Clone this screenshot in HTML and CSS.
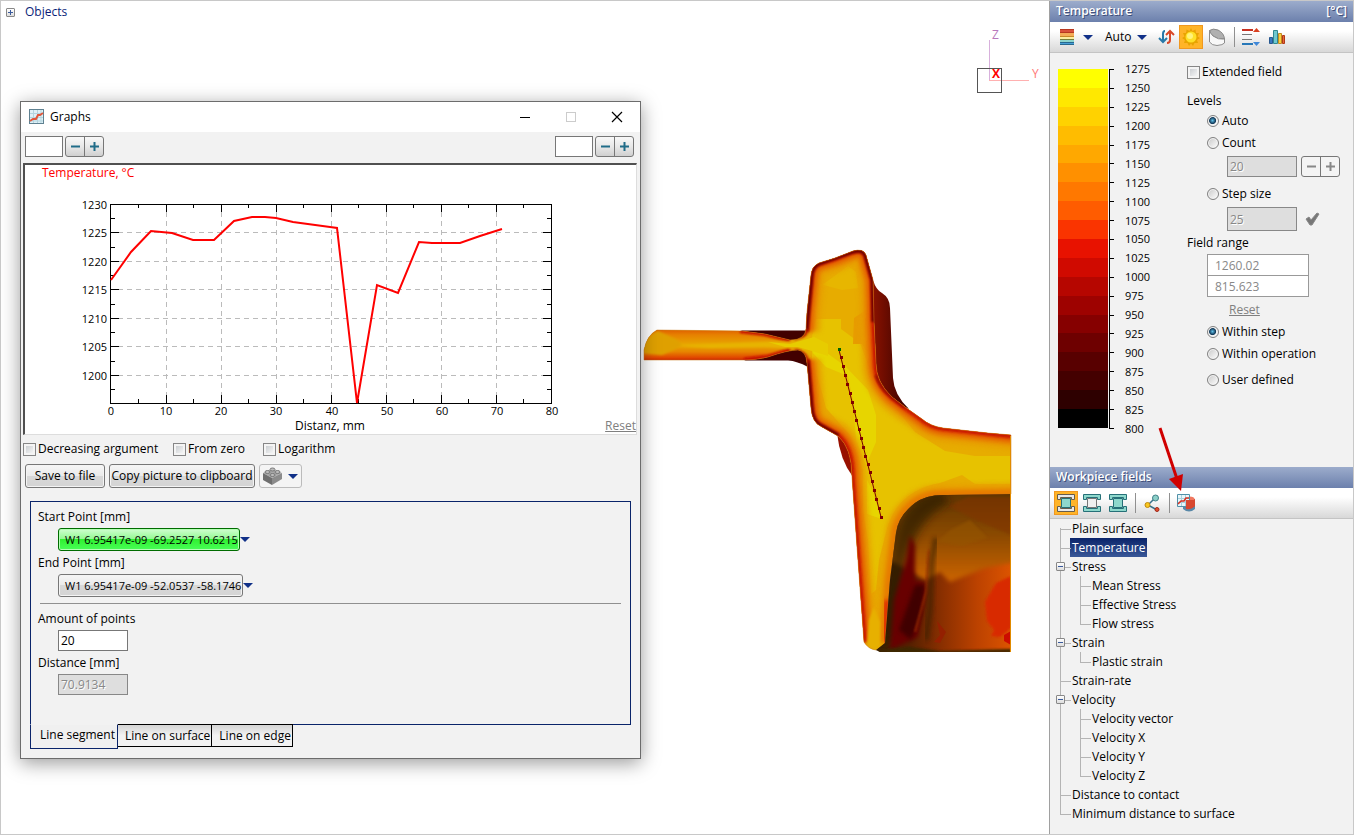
FILE: index.html
```html
<!DOCTYPE html>
<html lang="en">

<head>
    <meta charset="UTF-8">
    <meta name="viewport" content="width=device-width, initial-scale=1.0">
    <title>Graphs</title>
    <link rel="stylesheet" href="styles.css">
</head>

<body>
    <main class="viewport">
        <div class="objects">
            <button class="toggle" aria-label="Expand objects">
                <svg width="9" height="9" viewBox="0 0 9 9"><path d="M2 4.500h5M4.500 2v5" stroke="#3a5a9c"/></svg>
            </button>
            <a href="#objects">Objects</a>
        </div>

        <svg class="axes" width="70" height="70" viewBox="972 26 70 70">
            <path d="M989.500 40V80" stroke="#d8b0dc" fill="none"/>
            <path d="M989 80.500H1029" stroke="#ffb0b0" fill="none"/>
            <rect x="977.500" y="68.500" width="24" height="24" fill="none" stroke="#555"/>
            <text x="992" y="39" fill="#b878bc">Z</text>
            <text x="992" y="78" fill="#f00" class="axis-x">X</text>
            <text x="1032" y="78" fill="#ff7878">Y</text>
        </svg>

        <svg class="workpiece" width="376" height="410" viewBox="640 246 376 410">
            <defs>
                <path id="section" d="M811 275Q812 266 819 263L835 258L853 251Q863 248 866 255L873 280L874 322L876 363Q876 382 892 397L905 407L922 419Q930 426 943 428L988 433L1011 435V494L947 495Q927 494 915 503Q898 516 896 533L890 580L885 643Q882 649 876 650Q868 649 864 642L857 547L852 477Q852 448 838 436L822 427Q812 423 811 408L807 363Q806 351 798 350Q788 350 768 357Q757 360 744 360L644 360V350Q647 335 657 330L742 331L765 334L790 340Q805 340 806 329L807 312Z"/>
                <path id="outer" d="M806 331L807 312L811 275Q812 266 819 263L835 258L853 251Q863 248 866 255L873 280L874 322L876 363Q876 382 892 397L905 407L922 419Q930 426 943 428L988 433L1016 436M807 360L811 408Q812 423 822 427L838 436Q852 448 852 477L857 547L864 642"/>
                <path id="inner" d="M1016 494L947 495Q927 494 915 503Q898 516 896 533L890 580L885 643"/>
                <clipPath id="sectionClip"><use href="#section"/></clipPath>
                <clipPath id="pocketClip"><path id="pocket" d="M1011 494L947 495Q927 494 915 503Q898 516 896 533L890 580L885 643L876 650L880 652H1011Z"/></clipPath>
                <linearGradient id="pocketFill">
                    <stop offset="0" stop-color="#3a2000"/>
                    <stop offset=".25" stop-color="#542000"/>
                    <stop offset=".5" stop-color="#8c3000"/>
                    <stop offset=".75" stop-color="#bc4200"/>
                    <stop offset="1" stop-color="#dc5400"/>
                </linearGradient>
                <linearGradient id="pocketTop" x1="0" y1="0" x2="0" y2="1">
                    <stop offset="0" stop-color="#5c3400"/>
                    <stop offset=".5" stop-color="#8c4a00"/>
                    <stop offset="1" stop-color="#cc6400"/>
                </linearGradient>
                <linearGradient id="backWall">
                    <stop offset="0" stop-color="#8c1200"/>
                    <stop offset=".5" stop-color="#600a00"/>
                    <stop offset="1" stop-color="#380000"/>
                </linearGradient>
                <linearGradient id="arm" x1="0" y1="0" x2="0" y2="1">
                    <stop offset="0" stop-color="#dc5400"/>
                    <stop offset=".2" stop-color="#e78000"/>
                    <stop offset=".5" stop-color="#e7a800"/>
                    <stop offset=".7" stop-color="#e78400"/>
                    <stop offset=".88" stop-color="#e04400"/>
                    <stop offset="1" stop-color="#b00c00"/>
                </linearGradient>
                <filter id="soft1"><feGaussianBlur stdDeviation="1"/></filter>
                <filter id="soft2"><feGaussianBlur stdDeviation="2"/></filter>
                <filter id="soft4"><feGaussianBlur stdDeviation="4"/></filter>
            </defs>

            <path d="M873 280Q876 290 882 293Q890 298 890 308L893 378Q894 395 909 409L890 400L872 370Z" fill="url(#backWall)"/>
            <path d="M740 330.500H808V348H790L765 336ZM744 360.500H788Q797 361 808 367V346H790Z" fill="#420000"/>
            <path d="M837 433Q840 460 853 477L856 440Z" fill="#981000"/>

            <use href="#section" fill="#e7ac00"/>
            <g clip-path="url(#sectionClip)">
                <path d="M816 319H841V329L860 343L872 375L893 405L915 432L945 451L975 456H1011V484H975L962 475L940 483Q900 490 888 525L879 560L876 590L871 594L868 540L863 510V470L850 435L826 408L820 385L812 362L812 336Z" fill="#e7c200"/>
                <path d="M812 337L820 348L845 366L868 390L876 415V442L866 465L856 440L853 400L848 376L826 367L812 352Z" fill="#e7d500"/>
                <path d="M867 480L872 490L882 519L867 514Z" fill="#e7d500"/>
                <path d="M818 288L848 266L856 272L858 288L842 290L820 284Z" fill="#e7b600"/>
                <path d="M854 318L872 306V360L862 344H853Z" fill="#e79c00"/>
                <g fill="none" stroke-linejoin="round">
                    <use href="#inner" stroke="#e7a000" stroke-width="22" filter="url(#soft2)" opacity=".8"/>
                    <use href="#inner" stroke="#e77c00" stroke-width="11" filter="url(#soft2)"/>
                    <use href="#outer" stroke="#e79c00" stroke-width="29" filter="url(#soft2)" opacity=".65"/>
                    <use href="#outer" stroke="#e77c00" stroke-width="18" filter="url(#soft2)"/>
                    <use href="#outer" stroke="#e04400" stroke-width="9" filter="url(#soft2)"/>
                    <use href="#outer" stroke="#c81800" stroke-width="5" filter="url(#soft1)"/>
                    <path d="M885 643L888 600" stroke="#e03000" stroke-width="9" filter="url(#soft2)"/>
                    <path d="M806 331L811 275Q812 266 819 263L853 251Q863 248 866 255L873 280L874 322M807 360L811 408Q812 423 822 427L838 436" stroke="#700000" stroke-width="5" filter="url(#soft1)"/>
                    <path d="M876 375Q880 388 892 397L905 407" stroke="#980c00" stroke-width="3" filter="url(#soft1)"/>
                </g>
                <path d="M640 328H742L765 334L790 340H802V350H790L768 357L744 362H640Z" fill="url(#arm)"/>
                <path d="M740 331L765 334L790 340M744 360L768 357L790 350" fill="none" stroke="#c41000" stroke-width="4" filter="url(#soft1)"/>
                <path d="M795 341Q805 340 807 329M795 350Q806 351 808 363" fill="none" stroke="#b81800" stroke-width="3" filter="url(#soft1)"/>
                <path d="M675 346L690 345L765 342L790 342L812 335V354L798 348H785L765 347L710 348Z" fill="#e7b400" filter="url(#soft1)"/>
                <path d="M768 342L790 344L814 337L828 344V356L812 351L798 347L785 347Z" fill="#e7cc00"/>
                <path d="M642 353Q647 335 658 331L676 339L682 345L674 350L662 355Z" fill="#dfa000" filter="url(#soft1)"/>
                <path d="M867 644L869 620L874 607L880 622V644L874 650Z" fill="#e7b000" filter="url(#soft1)"/>
            </g>
            <use href="#section" fill="none" stroke="#c87818" stroke-opacity=".5"/>

            <use href="#pocket" fill="url(#pocketFill)"/>
            <g clip-path="url(#pocketClip)">
                <path d="M890 560L905 490H1016V562L985 568L950 582L940 572L925 580Z" fill="url(#pocketTop)" filter="url(#soft2)"/>
                <path d="M948 506L968 497H1011V535L975 520Z" fill="#803600" opacity=".6" filter="url(#soft1)"/>
                <path d="M936 542L950 530L970 520L988 538L962 546Z" fill="#945400" opacity=".6" filter="url(#soft1)"/>
                <path d="M890 560Q895 500 940 490L950 502Q918 518 907 560L901 630L880 650Z" fill="#2c1c00" opacity=".7" filter="url(#soft4)"/>
                <path d="M910 535L915 545V580L925 582L926 592L918 637L890 650L894 600L906 560Z" fill="#680600" filter="url(#soft2)"/>
                <path d="M915 585H925L921 615L911 640L899 630Z" fill="#400000" filter="url(#soft2)"/>
                <path d="M929 550L926 592L915 632" fill="none" stroke="#a03000" stroke-width="2" filter="url(#soft1)" opacity=".8"/>
                <path d="M936 538L932 560L930 610L926 640" fill="none" stroke="#3a2000" stroke-width="6" opacity=".6" filter="url(#soft2)"/>
                <path d="M1011 576L996 583L985 602L987 621L994 630L991 636L1000 637L1011 628Z" fill="#d82c00" filter="url(#soft1)"/>
                <path d="M1011 631L1004 635V641L1011 645Z" fill="#cc0c00"/>
                <path d="M937 621L946 632L940 643L934 642L940 635Z" fill="#942000"/>
                <path d="M878 650L910 647L940 651L1011 649V653H878Z" fill="#3c2800" filter="url(#soft1)"/>
            </g>
            <path d="M1010.500 436V652" stroke="#e08a00"/>

            <path d="M839 350L881 517" stroke="#780000"/>
            <path class="probe" d="M841.500 357.500h0M843.500 366.500h0M845.500 375.500h0M847.500 384.500h0M850.500 393.500h0M852.500 402.500h0M854.500 411.500h0M856.500 420.500h0M859.500 429.500h0M861.500 438.500h0M863.500 447.500h0M865.500 456.500h0M868.500 464.500h0M870.500 472.500h0M872.500 481.500h0M874.500 490.500h0M876.500 499.500h0M879.500 508.500h0M881.500 517.500h0"/>
            <rect x="838" y="348" width="3" height="3" fill="#006400"/>
        </svg>

        <section class="window" aria-label="Graphs">
            <header class="window-title">
                <svg width="16" height="16" viewBox="0 0 16 16">
                    <rect x=".5" y=".5" width="14" height="14" fill="#dff1f7" stroke="#5f8191"/>
                    <path d="M4.500 1v13M8.500 1v13M12 1v13M1 4.500h13M1 8.500h13M1 12h13" stroke="#b5d5df"/>
                    <path d="M1 12L4 10H7L9 6H11L14 4" fill="none" stroke="#e0583c" stroke-width="2"/>
                </svg>
                <h1>Graphs</h1>
                <div class="window-controls">
                    <button aria-label="Minimize"><svg width="12" height="12"><path d="M1 6.500h10" stroke="#000"/></svg></button>
                    <button aria-label="Maximize" disabled><svg width="12" height="12"><rect x="1.500" y="1.500" width="9" height="9" fill="none" stroke="#ccc"/></svg></button>
                    <button aria-label="Close"><svg width="12" height="12"><path d="M1 1L11 11M11 1L1 11" stroke="#000" stroke-width="1.200"/></svg></button>
                </div>
            </header>

            <div class="window-tools">
                <div class="stepper">
                    <input type="text" class="field tiny" aria-label="Left axis">
                    <span class="pair"><button aria-label="Decrease left"><svg width="9" height="9"><path d="M0 4.500h9" /></svg></button><button aria-label="Increase left"><svg width="9" height="9"><path d="M0 4.500h9M4.500 0v9"/></svg></button></span>
                </div>
                <div class="stepper">
                    <input type="text" class="field tiny" aria-label="Right axis">
                    <span class="pair"><button aria-label="Decrease right"><svg width="9" height="9"><path d="M0 4.500h9"/></svg></button><button aria-label="Increase right"><svg width="9" height="9"><path d="M0 4.500h9M4.500 0v9"/></svg></button></span>
                </div>
            </div>

            <div class="chart">
                <svg viewBox="25 165 611 269">
                    <path class="grid" d="M166.500 212V403M221.500 212V403M276.500 212V403M331.500 212V403M386.500 212V403M441.500 212V403M496.500 212V403M118 232.500H551M118 261.500H551M118 289.500H551M118 318.500H551M118 346.500H551M118 375.500H551"/>
                    <path class="ticks" d="M110.500 204.500H551.500V403.500H110.500ZM166 204v8M221 204v8M276 204v8M331 204v8M386 204v8M441 204v8M496 204v8M166 403v-8M221 403v-8M276 403v-8M331 403v-8M386 403v-8M441 403v-8M496 403v-8"/>
                    <path class="ticks" d="M138 204v4M193 204v4M248 204v4M303 204v4M358 204v4M413 204v4M468 204v4M523 204v4M138 403v-4M193 403v-4M248 403v-4M303 403v-4M358 403v-4M413 403v-4M468 403v-4M523 403v-4"/>
                    <path class="ticks" d="M111 232h8M111 261h8M111 289h8M111 318h8M111 346h8M111 375h8M551 232h-8M551 261h-8M551 289h-8M551 318h-8M551 346h-8M551 375h-8"/>
                    <path class="ticks" d="M111 218h4M111 247h4M111 275h4M111 304h4M111 332h4M111 361h4M111 389h4M551 218h-4M551 247h-4M551 275h-4M551 304h-4M551 332h-4M551 361h-4M551 389h-4"/>
                    <polyline class="curve" points="111,280 131,252 151,231 172,233 193,240 214,240 234,221 252,217 265,217 276,218 293,222 330,227 337,228 357,403 377,285 398,293 419,242 432,243 460,243 480,236 502,229"/>
                    <text x="42" y="177" class="curve-name">Temperature, °C</text>
                    <g class="numbers" text-anchor="end">
                        <text x="107" y="209">1230</text>
                        <text x="107" y="237">1225</text>
                        <text x="107" y="266">1220</text>
                        <text x="107" y="294">1215</text>
                        <text x="107" y="323">1210</text>
                        <text x="107" y="351">1205</text>
                        <text x="107" y="380">1200</text>
                    </g>
                    <g class="numbers" text-anchor="middle">
                        <text x="111" y="415">0</text>
                        <text x="166" y="415">10</text>
                        <text x="221" y="415">20</text>
                        <text x="276" y="415">30</text>
                        <text x="332" y="415">40</text>
                        <text x="387" y="415">50</text>
                        <text x="442" y="415">60</text>
                        <text x="497" y="415">70</text>
                        <text x="552" y="415">80</text>
                    </g>
                    <text x="330" y="430" text-anchor="middle">Distanz, mm</text>
                </svg>
                <a href="#reset" class="reset chart-reset">Reset</a>
            </div>

            <div class="options">
                <label><input type="checkbox" class="check">Decreasing argument</label>
                <label><input type="checkbox" class="check">From zero</label>
                <label><input type="checkbox" class="check">Logarithm</label>
            </div>

            <div class="actions">
                <button class="button save">Save to file</button>
                <button class="button copy">Copy picture to clipboard</button>
                <button class="button brick" aria-label="Palette">
                    <svg width="19" height="19" viewBox="0 0 19 19">
                        <path d="M0 6L9 2L19 6L9 11Z" fill="#a8a8a8"/>
                        <path d="M0 6L9 11V18L0 13Z" fill="#6f6f6f"/>
                        <path d="M19 6L9 11V18L19 12Z" fill="#8b8b8b"/>
                        <g fill="#bcbcbc" stroke="#777">
                            <ellipse cx="9.500" cy="2.500" rx="2.500" ry="1.500"/>
                            <ellipse cx="4.500" cy="5" rx="2.500" ry="1.500"/>
                            <ellipse cx="14.500" cy="5" rx="2.500" ry="1.500"/>
                            <ellipse cx="9.500" cy="8" rx="2.500" ry="1.500"/>
                        </g>
                    </svg>
                    <span class="arrow"></span>
                </button>
            </div>

            <div class="panel">
                <p>Start Point [mm]</p>
                <div class="point"><button class="button coords green">W1 6.95417e-09 -69.2527 10.6215</button><span class="arrow"></span></div>
                <p>End Point [mm]</p>
                <div class="point"><button class="button coords">W1 6.95417e-09 -52.0537 -58.1746</button><span class="arrow"></span></div>
                <hr>
                <label for="amount">Amount of points</label>
                <input type="text" id="amount" class="field" value="20">
                <label for="distance">Distance [mm]</label>
                <input type="text" id="distance" class="field" value="70.9134" disabled>
            </div>
            <nav class="tabs">
                <button class="tab active">Line segment</button>
                <button class="tab">Line on surface</button>
                <button class="tab">Line on edge</button>
            </nav>
        </section>
    </main>

    <aside class="sidebar">
        <header class="caption"><h2>Temperature</h2><span>[°C]</span></header>
        <div class="toolbar">
            <button class="tool palette" aria-label="Color scale">
                <svg width="16" height="18" viewBox="0 0 16 18">
                    <path d="M1 1h14v3H1z" fill="#d8503c"/><path d="M1 4h14v4H1z" fill="#f4ac58"/>
                    <path d="M1 8h14v3H1z" fill="#fbeea0"/><path d="M1 11h14v3H1z" fill="#8cd4cc"/><path d="M1 14h14v3H1z" fill="#48a0d8"/>
                    <path d="M1 1.500h14M1 4.500h14" stroke="#b83820"/><path d="M1 8.500h14" stroke="#c88828"/><path d="M1 11.500h14" stroke="#78803c"/><path d="M1 14.500h14M1 16.500h14" stroke="#286890"/>
                </svg>
                <span class="arrow"></span>
            </button>
            <button class="tool auto">Auto <span class="arrow"></span></button>
            <button class="tool" aria-label="Invert">
                <svg width="17" height="16" viewBox="0 0 17 16" fill="none" stroke-width="2">
                    <path d="M7 2Q5 2 5 5V13M1 9L5 13L9 9" stroke="#2878a8"/>
                    <path d="M9 14Q12 14 12 11V2M8 6L12 2L16 6" stroke="#d84828"/>
                </svg>
            </button>
            <button class="tool pressed" aria-label="Lighting">
                <svg width="18" height="18" viewBox="0 0 18 18">
                    <path d="M9 0L10.500 3L13.500 1.500L14 5L17 5L15.500 8.500L18 10L15 12L16 15H12.500L11 18L9 15.500L7 18L5.500 15H2L3 12L0 10L2.500 8.500L1 5L4 5L4.500 1.500L7.500 3Z" fill="#e8a400"/>
                    <circle cx="9" cy="9" r="5.500" fill="#ffe028"/><circle cx="8" cy="8" r="3" fill="#fff27c"/>
                </svg>
            </button>
            <button class="tool" aria-label="Section">
                <svg width="18" height="18" viewBox="0 0 18 18">
                    <path d="M1.500 2.500Q5 0 10 2Q16 5 16.500 11Q10 12 5 8Q2 5 1.500 2.500Z" fill="#b0b0b0" stroke="#888"/>
                    <path d="M1.500 2.500V14Q4 17.500 9 17.500Q15 17 16.500 15V11Q10 12 5 8Q2 5 1.500 2.500Z" fill="#f8f8f8" stroke="#8c8c8c"/>
                </svg>
            </button>
            <span class="divider"></span>
            <button class="tool" aria-label="Limits">
                <svg width="19" height="18" viewBox="0 0 19 18">
                    <path d="M0 2h11" stroke="#c83020" stroke-width="2"/><path d="M0 6.500h10M0 11.500h10" stroke="#777"/><path d="M0 16h11" stroke="#2878b8" stroke-width="2"/>
                    <path d="M11 4L14.500 0L18 4Z" fill="#d84020"/><path d="M11 14L14.500 18L18 14Z" fill="#4088d8"/>
                </svg>
            </button>
            <button class="tool" aria-label="Histogram">
                <svg width="18" height="16" viewBox="0 0 18 16">
                    <path d="M1.500 8.500h3v6h-3z" fill="#3878c0" stroke="#285890"/><path d="M5.500 1.500h4v13h-4z" fill="#70c8d0" stroke="#308890"/>
                    <path d="M10.500 4.500h3v10h-3z" fill="#f8d040" stroke="#c08820"/><path d="M14.500 6.500h2v8h-2z" fill="#e86838" stroke="#b03818"/>
                </svg>
            </button>
        </div>

        <div class="temperature">
            <div class="scale">
                <div class="bands">
                    <i class="t1"></i><i class="t2"></i><i class="t3"></i><i class="t4"></i><i class="t5"></i><i class="t6"></i><i class="t7"></i><i class="t8"></i><i class="t9"></i><i class="t10"></i><i class="t11"></i><i class="t12"></i><i class="t13"></i><i class="t14"></i><i class="t15"></i><i class="t16"></i><i class="t17"></i><i class="t18"></i><i class="t19"></i>
                </div>
                <div class="marks">
                    <i></i><i></i><i></i><i></i><i></i><i></i><i></i><i></i><i></i><i></i><i></i><i></i><i></i><i></i><i></i><i></i><i></i><i></i><i></i><i></i>
                </div>
                <ol class="values">
                    <li>1275</li><li>1250</li><li>1225</li><li>1200</li><li>1175</li><li>1150</li><li>1125</li><li>1100</li><li>1075</li><li>1050</li><li>1025</li><li>1000</li><li>975</li><li>950</li><li>925</li><li>900</li><li>875</li><li>850</li><li>825</li><li>800</li>
                </ol>
            </div>
            <form class="settings">
                <label><input type="checkbox" class="check">Extended field</label>
                <p class="levels">Levels</p>
                <label class="sub"><input type="radio" class="radio" name="levels" checked>Auto</label>
                <label class="sub count"><input type="radio" class="radio" name="levels">Count</label>
                <div class="amount">
                    <input type="text" class="field" value="20" aria-label="Count" disabled>
                    <span class="pair"><button disabled aria-label="Less"><svg width="9" height="9"><path d="M0 4.500h9"/></svg></button><button disabled aria-label="More"><svg width="9" height="9"><path d="M0 4.500h9M4.500 0v9"/></svg></button></span>
                </div>
                <label class="sub"><input type="radio" class="radio" name="levels">Step size</label>
                <div class="amount step">
                    <input type="text" class="field" value="25" aria-label="Step size" disabled>
                    <svg width="15" height="14" viewBox="0 0 15 14"><path d="M1 7L4 5L6 8L12 1L14 2L7 13H5Z" fill="#777" stroke="#666"/></svg>
                </div>
                <p>Field range</p>
                <div class="range">
                    <input type="text" value="1260.02" aria-label="Maximum" disabled>
                    <input type="text" value="815.623" aria-label="Minimum" disabled>
                </div>
                <a href="#reset-range" class="reset">Reset</a>
                <label class="sub"><input type="radio" class="radio" name="range" checked>Within step</label>
                <label class="sub count"><input type="radio" class="radio" name="range">Within operation</label>
                <label class="sub user"><input type="radio" class="radio" name="range">User defined</label>
            </form>
        </div>

        <header class="caption"><h2>Workpiece fields</h2></header>
        <div class="toolbar">
            <button class="tool pressed" aria-label="Workpiece">
                <svg width="20" height="20" viewBox="0 0 20 20"><g fill="#e8e8e8" stroke="#665c4c"><path d="M1.500 1.500h17v5h-3v-2h-11v2h-3zM1.500 18.500h17v-5h-3v2h-11v-2h-3z"/></g><path d="M5.500 5.500h9v9h-9z" fill="#8ed8cc" stroke="#267078"/></svg>
            </button>
            <button class="tool" aria-label="Tools">
                <svg width="20" height="20" viewBox="0 0 20 20"><g fill="#8ed8cc" stroke="#267078"><path d="M1.500 1.500h17v5h-3v-2h-11v2h-3zM1.500 18.500h17v-5h-3v2h-11v-2h-3z"/></g><path d="M5.500 5.500h9v9h-9z" fill="#f0f0f0" stroke="#777"/></svg>
            </button>
            <button class="tool" aria-label="Workpiece and tools">
                <svg width="20" height="20" viewBox="0 0 20 20"><g fill="#8ed8cc" stroke="#267078"><path d="M1.500 1.500h17v5h-3v-2h-11v2h-3zM1.500 18.500h17v-5h-3v2h-11v-2h-3z"/><path d="M5.500 5.500h9v9h-9z"/></g></svg>
            </button>
            <span class="divider"></span>
            <button class="tool" aria-label="Tracked points">
                <svg width="16" height="18" viewBox="0 0 16 18"><path d="M11 4L4 11L13 16" fill="none" stroke="#387088" stroke-width="1.500"/><circle cx="11.500" cy="4" r="3" fill="#8cd0c8" stroke="#408088"/><circle cx="3.500" cy="11" r="2.500" fill="#f8c820" stroke="#c08810"/><circle cx="13" cy="15.500" r="2" fill="#e05030" stroke="#a02818"/></svg>
            </button>
            <span class="divider"></span>
            <button class="tool" aria-label="Graphs">
                <svg width="18" height="18" viewBox="0 0 18 18"><path d="M6 6V15Q12 20 18 15V6Z" fill="#5888a8"/><path d="M7 5V12Q12 18 18 12V5Z" fill="#d84030"/><ellipse cx="12.500" cy="5" rx="5" ry="2.500" fill="#f07860"/><path d="M.5.500h12v12H.5z" fill="#e8f6fa" stroke="#5090a8"/><path d="M9 6H18V12Q14 16 9 15Z" fill="#d84830"/><path d="M4.500 1v11M8.500 1v11M1 4.500h11M1 8.500h7" stroke="#a8d0dc"/><path d="M1 10L4 7L7 7L9 4L12 4" fill="none" stroke="#d83020" stroke-width="1.500"/></svg>
            </button>
        </div>
        <ul class="tree">
            <li><a href="#plain">Plain surface</a></li>
            <li><a href="#temperature" class="selected">Temperature</a></li>
            <li><button class="toggle" aria-label="Collapse stress"><svg width="9" height="9"><path d="M2 4.500h5" stroke="#3a5a9c"/></svg></button><a href="#stress">Stress</a>
                <ul>
                    <li><a href="#mean-stress">Mean Stress</a></li>
                    <li><a href="#effective-stress">Effective Stress</a></li>
                    <li><a href="#flow-stress">Flow stress</a></li>
                </ul>
            </li>
            <li><button class="toggle" aria-label="Collapse strain"><svg width="9" height="9"><path d="M2 4.500h5" stroke="#3a5a9c"/></svg></button><a href="#strain">Strain</a>
                <ul>
                    <li><a href="#plastic-strain">Plastic strain</a></li>
                </ul>
            </li>
            <li><a href="#strain-rate">Strain-rate</a></li>
            <li><button class="toggle" aria-label="Collapse velocity"><svg width="9" height="9"><path d="M2 4.500h5" stroke="#3a5a9c"/></svg></button><a href="#velocity">Velocity</a>
                <ul>
                    <li><a href="#velocity-vector">Velocity vector</a></li>
                    <li><a href="#velocity-x">Velocity X</a></li>
                    <li><a href="#velocity-y">Velocity Y</a></li>
                    <li><a href="#velocity-z">Velocity Z</a></li>
                </ul>
            </li>
            <li><a href="#contact">Distance to contact</a></li>
            <li><a href="#surface">Minimum distance to surface</a></li>
        </ul>
        <svg class="pointer" width="36" height="68" viewBox="1154 425 36 68">
            <path d="M1160 428L1177 479" stroke="#d00000" stroke-width="3"/>
            <path d="M1169 479L1183 474L1181 491Z" fill="#d00000"/>
        </svg>
    </aside>
</body>

</html>
```
FILE: styles.css
```css
* {
    box-sizing: border-box;
}

body {
    display: flex;
    min-height: 100vh;
    margin: 0;
    background: #fff;
    border: 1px solid #c8c8c8;
    color: #000;
    font-family: "Open Sans", "Noto Sans", sans-serif;
    font-size: 12px;
    line-height: 20px;
}

button,
input {
    margin: 0;
    padding: 0;
    font: inherit;
    color: inherit;
}

button {
    display: inline-flex;
    align-items: center;
    justify-content: center;
    border: 0;
    background: none;
    white-space: nowrap;
}

a {
    color: inherit;
    text-decoration: none;
}

h1,
h2,
p {
    margin: 0;
    font-size: 12px;
    font-weight: normal;
}

svg {
    display: block;
    flex: none;
}

svg text {
    font-size: 12px;
}

label {
    display: flex;
    align-items: center;
}

.viewport {
    position: relative;
    flex: 1;
}

.objects {
    display: flex;
    align-items: center;
    gap: 10px;
    padding: 1px 5px;
    color: #0a1e78;
}

.toggle {
    width: 9px;
    height: 9px;
    border: 1px solid #888;
    border-radius: 1px;
    background: linear-gradient(#fff, #ddd);
}

/* canvas */
.axes {
    position: absolute;
    left: 971px;
    top: 25px;
}

.axis-x {
    font-weight: bold;
}

.workpiece {
    position: absolute;
    left: 639px;
    top: 245px;
}

.probe {
    stroke: #800000;
    stroke-width: 3;
    stroke-linecap: square;
}

/* graph window */
.window {
    position: absolute;
    left: 19px;
    top: 100px;
    width: 621px;
    padding-bottom: 9px;
    background: #f2f2f2;
    border: 1px solid #6c6c6c;
    box-shadow: 0 4px 18px rgba(0, 0, 0, 0.4);
}

.window-title {
    display: flex;
    align-items: center;
    gap: 5px;
    height: 30px;
    padding-left: 8px;
    background: #fff;
}

.window-controls {
    display: flex;
    margin-left: auto;
}

.window-controls button {
    width: 46px;
    height: 30px;
}

.window-tools {
    display: flex;
    justify-content: space-between;
    padding: 4px 6px 6px 4px;
}

.stepper {
    display: flex;
    gap: 2px;
}

.field {
    width: 70px;
    height: 21px;
    padding: 0 2px;
    background: #fff;
    border: 1px solid #777;
    border-radius: 0;
}

.field:disabled {
    background: #dedede;
    border-color: #888;
    color: #888;
    text-shadow: 1px 1px #fff;
}

.tiny {
    width: 38px;
}

.pair {
    display: flex;
    height: 21px;
    border: 1px solid #777;
    border-radius: 3px;
    background: linear-gradient(#f8f8f8, #e8e8e8 50%, #d0d0d0);
}

.pair button {
    width: 18px;
}

.pair button + button {
    width: 19px;
    border-left: 1px solid #777;
}

.pair path {
    stroke: #206c88;
    stroke-width: 2;
}

.chart {
    position: relative;
    margin: 0 3px 0 2px;
    background: #fff;
    border: 1px solid #ddd;
    border-top: 2px solid #505050;
    border-left: 2px solid #505050;
}

.chart svg {
    width: 100%;
}

.grid {
    stroke: #bbb;
    stroke-dasharray: 5 4;
}

.ticks {
    fill: none;
    stroke: #000;
    shape-rendering: crispEdges;
}

.curve {
    fill: none;
    stroke: #f00;
    stroke-width: 2;
}

.curve-name {
    fill: #f00;
}

.numbers text {
    font-size: 11px;
}

.reset {
    color: #808080;
    text-decoration: underline;
}

.chart-reset {
    position: absolute;
    right: 0;
    bottom: -2px;
}

.options {
    display: flex;
    padding: 4px 2px;
}

.options label {
    width: 90px;
    white-space: nowrap;
}

.options label:first-child {
    width: 150px;
}

.check {
    appearance: none;
    width: 13px;
    height: 13px;
    margin-right: 2px;
    border: 1px solid #868686;
    background: linear-gradient(135deg, #c0c4c8, #fff);
    box-shadow: inset 0 0 0 2px #f4f4f4;
}

.actions {
    display: flex;
    gap: 4px;
    padding: 1px 4px 13px;
}

.button {
    height: 24px;
    border: 1px solid #777;
    border-radius: 3px;
    background: linear-gradient(#f6f6f6, #eaeaea 50%, #d8d8d8 50%, #d4d4d4);
    box-shadow: inset 0 0 0 1px #f4f4f4;
}

.save {
    width: 80px;
}

.copy {
    width: 146px;
}

.brick {
    gap: 6px;
    width: 43px;
    background: #f4f4f4;
    border-color: #bbb;
}

.arrow {
    border: 5px solid transparent;
    border-top-color: #103088;
    border-bottom: 0;
}

.panel {
    display: flex;
    flex-direction: column;
    align-items: flex-start;
    margin: 0 9px;
    padding: 5px 7px 27px;
    border: 1px solid #0a246a;
}

.point {
    display: flex;
    align-items: center;
    margin: 1px 0 2px 20px;
}

.coords {
    height: 23px;
    padding: 0 1px 0 6px;
    font-size: 11px;
}

.green {
    border-color: #006c00;
    background: linear-gradient(#d0ffd0, #90f890 50%, #30f030 50%, #48ff58);
    box-shadow: inset 0 0 0 1px #b4ffb4;
}

.panel hr {
    align-self: stretch;
    margin: 4px 2px 5px;
    border: 0;
    border-top: 1px solid #909090;
}

.panel .field {
    margin: 1px 0 2px 20px;
}

.tabs {
    display: flex;
    align-items: flex-start;
    margin: -1px 9px 0;
}

.tab {
    height: 23px;
    padding: 0 1px 0 7px;
    border: 1px solid #000;
    border-left-width: 0;
    background: linear-gradient(#d4d4d4, #f2f2f2 50%);
}

.tab.active {
    height: 25px;
    padding: 0 2px 3px 9px;
    border: 1px solid #0a246a;
    border-top-color: #f2f2f2;
    background: #f0f0f0;
}

/* sidebar */
.sidebar {
    position: relative;
    width: 304px;
    background: #f2f2f2;
    border-left: 1px solid #a0a0a0;
}

.caption {
    display: flex;
    justify-content: space-between;
    height: 21px;
    padding: 0 6px;
    background: linear-gradient(#9caccc, #6c80ac);
    color: #fff;
    text-shadow: 1px 1px #40507c;
}

.caption h2,
.caption span {
    font-weight: 600;
}

.toolbar {
    display: flex;
    align-items: center;
    height: 31px;
    padding: 0 4px;
    background: linear-gradient(#fff 30%, #d8d8d8);
    border-bottom: 1px solid #c4c4c4;
}

.tool {
    min-width: 26px;
    height: 24px;
    padding: 0 3px;
}

.tool.palette {
    gap: 8px;
    padding-left: 5px;
}

.tool.auto {
    gap: 6px;
    margin: 0 3px 0 6px;
}

.tool.pressed {
    width: 24px;
    min-width: 24px;
    margin-right: 1px;
    padding: 0;
    background: #ffb428;
    border: 1px solid #f09820;
}

.divider {
    height: 20px;
    margin: 0 3px 0 4px;
    border-left: 1px solid #909090;
}

.temperature {
    display: flex;
    height: 414px;
    padding: 7px 8px 0;
}

.scale {
    display: flex;
    width: 129px;
}

.bands {
    display: flex;
    flex-direction: column;
    width: 50px;
    height: 359px;
    margin-top: 9px;
}

.bands i {
    flex: 1;
}

.t1 { background: #ffff00; }
.t2 { background: #ffe800; }
.t3 { background: #ffd200; }
.t4 { background: #ffbc00; }
.t5 { background: #ffa800; }
.t6 { background: #ff9000; }
.t7 { background: #ff7800; }
.t8 { background: #ff5c00; }
.t9 { background: #fa3400; }
.t10 { background: #e81200; }
.t11 { background: #d00a00; }
.t12 { background: #b60600; }
.t13 { background: #9e0200; }
.t14 { background: #860000; }
.t15 { background: #6e0000; }
.t16 { background: #580000; }
.t17 { background: #440000; }
.t18 { background: #2e0000; }
.t19 { background: #000; }

.marks {
    display: flex;
    flex-direction: column;
    justify-content: space-between;
    width: 5px;
    height: 360px;
    margin: 9px 0 0 1px;
    border-left: 1px solid #000;
}

.marks i {
    height: 1px;
    background: #000;
}

.values {
    display: flex;
    flex-direction: column;
    justify-content: space-between;
    height: 378px;
    margin: 0 0 0 11px;
    padding: 0;
    font-size: 11px;
    line-height: 18px;
    list-style: none;
}

.settings {
    display: flex;
    flex-direction: column;
    padding-top: 2px;
}

.levels {
    margin-top: 9px;
}

.sub {
    margin-left: 20px;
}

.count {
    margin-top: 2px;
}

.user {
    margin-top: 6px;
}

.radio {
    appearance: none;
    width: 12px;
    height: 12px;
    margin-right: 3px;
    border: 1px solid #808080;
    border-radius: 50%;
    background: linear-gradient(135deg, #c8c8c8, #fff);
    box-shadow: inset 0 0 0 1px #f4f4f4;
}

.radio:checked {
    background: radial-gradient(circle at 45% 45%, #60c0e8, #103858 40%, #f4f4f4 52%);
}

.amount {
    display: flex;
    align-items: center;
    gap: 4px;
    margin: 3px 0 7px 40px;
}

.amount .pair {
    background: #f4f4f4;
}

.amount path {
    stroke: #888;
}

.amount.step {
    gap: 8px;
    margin: 3px 0 2px 40px;
}

.step .field {
    height: 24px;
}

.range {
    display: flex;
    flex-direction: column;
    width: 102px;
    margin: 1px 0 3px 20px;
}

.range input {
    height: 22px;
    padding: 0 7px;
    background: #fff;
    border: 1px solid #999;
    color: #888;
}

.range input + input {
    margin-top: -1px;
}

.settings .reset {
    align-self: flex-start;
    margin: 0 0 2px 42px;
}

.tree,
.tree ul {
    margin: 0;
    padding: 0;
    list-style: none;
}

.tree {
    padding-left: 10px;
    line-height: 19px;
}

.tree li {
    position: relative;
    padding-left: 10px;
}

.tree li::before {
    content: "";
    position: absolute;
    left: 0;
    top: 0;
    width: 10px;
    height: 10px;
    border-left: 1px solid #b4b4b4;
    border-bottom: 1px solid #b4b4b4;
}

.tree > li:first-child::before {
    top: 9px;
    height: 1px;
}

.tree li:not(:last-child)::after {
    content: "";
    position: absolute;
    left: 0;
    top: 9px;
    bottom: 0;
    border-left: 1px solid #b4b4b4;
}

.tree ul {
    padding-left: 10px;
}

.tree a {
    display: inline-block;
    padding: 0 2px;
}

.tree .selected {
    background: linear-gradient(#0a246a, #3a5898);
    color: #fff;
}

.tree .toggle {
    position: absolute;
    left: -4px;
    top: 5px;
    z-index: 1;
}

.pointer {
    position: absolute;
    left: 104px;
    top: 424px;
}
```
